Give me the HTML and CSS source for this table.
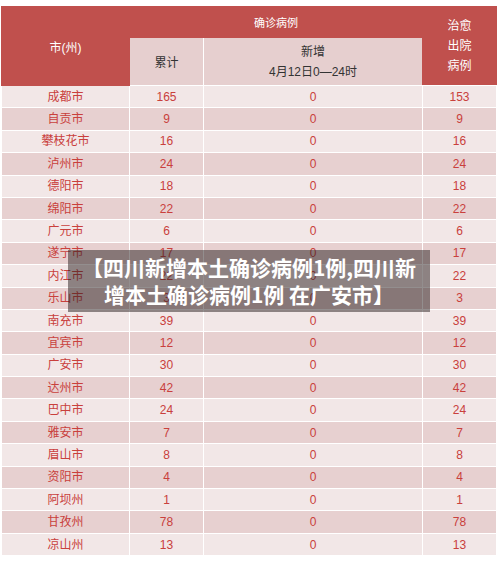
FILE: index.html
```html
<!DOCTYPE html>
<html lang="zh-CN">
<head>
  <meta charset="UTF-8">
  <meta name="viewport" content="width=device-width, initial-scale=1.0">
  <title>四川新增本土确诊病例</title>
  <link rel="stylesheet" href="styles.css">
</head>
<body>
  <div class="page">
    <table class="cases">
      <colgroup>
        <col class="c-city">
        <col class="c-total">
        <col class="c-new">
        <col class="c-cured">
      </colgroup>
      <thead>
        <tr class="head-top">
          <th rowspan="2" class="red">市(州)</th>
          <th colspan="2" class="red">确诊病例</th>
          <th rowspan="2" class="red multi">治愈<br>出院<br>病例</th>
        </tr>
        <tr class="head-sub">
          <th>累计</th>
          <th class="multi">新增<br>4月12日0—24时</th>
        </tr>
      </thead>
      <tbody>
        <tr><td>成都市</td><td>165</td><td>0</td><td>153</td></tr>
        <tr><td>自贡市</td><td>9</td><td>0</td><td>9</td></tr>
        <tr><td>攀枝花市</td><td>16</td><td>0</td><td>16</td></tr>
        <tr><td>泸州市</td><td>24</td><td>0</td><td>24</td></tr>
        <tr><td>德阳市</td><td>18</td><td>0</td><td>18</td></tr>
        <tr><td>绵阳市</td><td>22</td><td>0</td><td>22</td></tr>
        <tr><td>广元市</td><td>6</td><td>0</td><td>6</td></tr>
        <tr><td>遂宁市</td><td>17</td><td>0</td><td>17</td></tr>
        <tr><td>内江市</td><td>22</td><td>0</td><td>22</td></tr>
        <tr><td>乐山市</td><td>3</td><td>0</td><td>3</td></tr>
        <tr><td>南充市</td><td>39</td><td>0</td><td>39</td></tr>
        <tr><td>宜宾市</td><td>12</td><td>0</td><td>12</td></tr>
        <tr><td>广安市</td><td>30</td><td>0</td><td>30</td></tr>
        <tr><td>达州市</td><td>42</td><td>0</td><td>42</td></tr>
        <tr><td>巴中市</td><td>24</td><td>0</td><td>24</td></tr>
        <tr><td>雅安市</td><td>7</td><td>0</td><td>7</td></tr>
        <tr><td>眉山市</td><td>8</td><td>0</td><td>8</td></tr>
        <tr><td>资阳市</td><td>4</td><td>0</td><td>4</td></tr>
        <tr><td>阿坝州</td><td>1</td><td>0</td><td>1</td></tr>
        <tr><td>甘孜州</td><td>78</td><td>0</td><td>78</td></tr>
        <tr><td>凉山州</td><td>13</td><td>0</td><td>13</td></tr>
      </tbody>
    </table>

    <div class="caption">【四川新增本土确诊病例1例,四川新<br>增本土确诊病例1例 在广安市】</div>
  </div>
</body>
</html>
```

FILE: styles.css
```css
body {
  margin: 0;
  background: #fff;
  font-family: "Liberation Sans", "Noto Sans CJK SC", sans-serif;
}

.page {
  position: relative;
  width: 500px;
  height: 564px;
  padding: 6px 0 0 1px;
  box-sizing: border-box;
}

.cases {
  width: 495px;
  border-collapse: collapse;
  border-top: 1px solid #dcdcdc;
  table-layout: fixed;
  font-size: 12px;
}

.c-city { width: 128px; }
.c-total { width: 74px; }
.c-new { width: 219px; }
.c-cured { width: 74px; }

.cases th,
.cases td {
  padding: 0;
  text-align: center;
  border: 1px solid #fff;
  font-weight: normal;
}

.cases th {
  color: #333;
  background: #e6cfcf;
}

.cases th.red {
  color: #fff;
  background: #c0504d;
  border-color: #c0504d;
}

.head-top th {
  height: 30px;
  font-size: 11px;
}

.head-top th:first-child {
  font-size: 12px;
}

.head-sub th {
  height: 47px;
  font-size: 12px;
}

.cases .multi {
  line-height: 20px;
}

.head-top th.multi {
  font-size: 12px;
  border-bottom-color: #fff;
}

.cases td {
  height: 21.4px;
  color: #c9403c;
  background: #f2e7e7;
  line-height: 14px;
}

.cases tbody tr:nth-child(even) td {
  background: #e7d0d0;
}

.caption {
  position: absolute;
  left: 68px;
  top: 250px;
  width: 362px;
  height: 62px;
  box-sizing: border-box;
  padding-top: 4px;
  background: rgba(40, 30, 30, 0.5);
  color: #fff;
  font-family: "Noto Sans CJK SC", sans-serif;
  font-size: 21px;
  font-weight: bold;
  line-height: 27px;
  text-align: center;
  white-space: nowrap;
}
```
